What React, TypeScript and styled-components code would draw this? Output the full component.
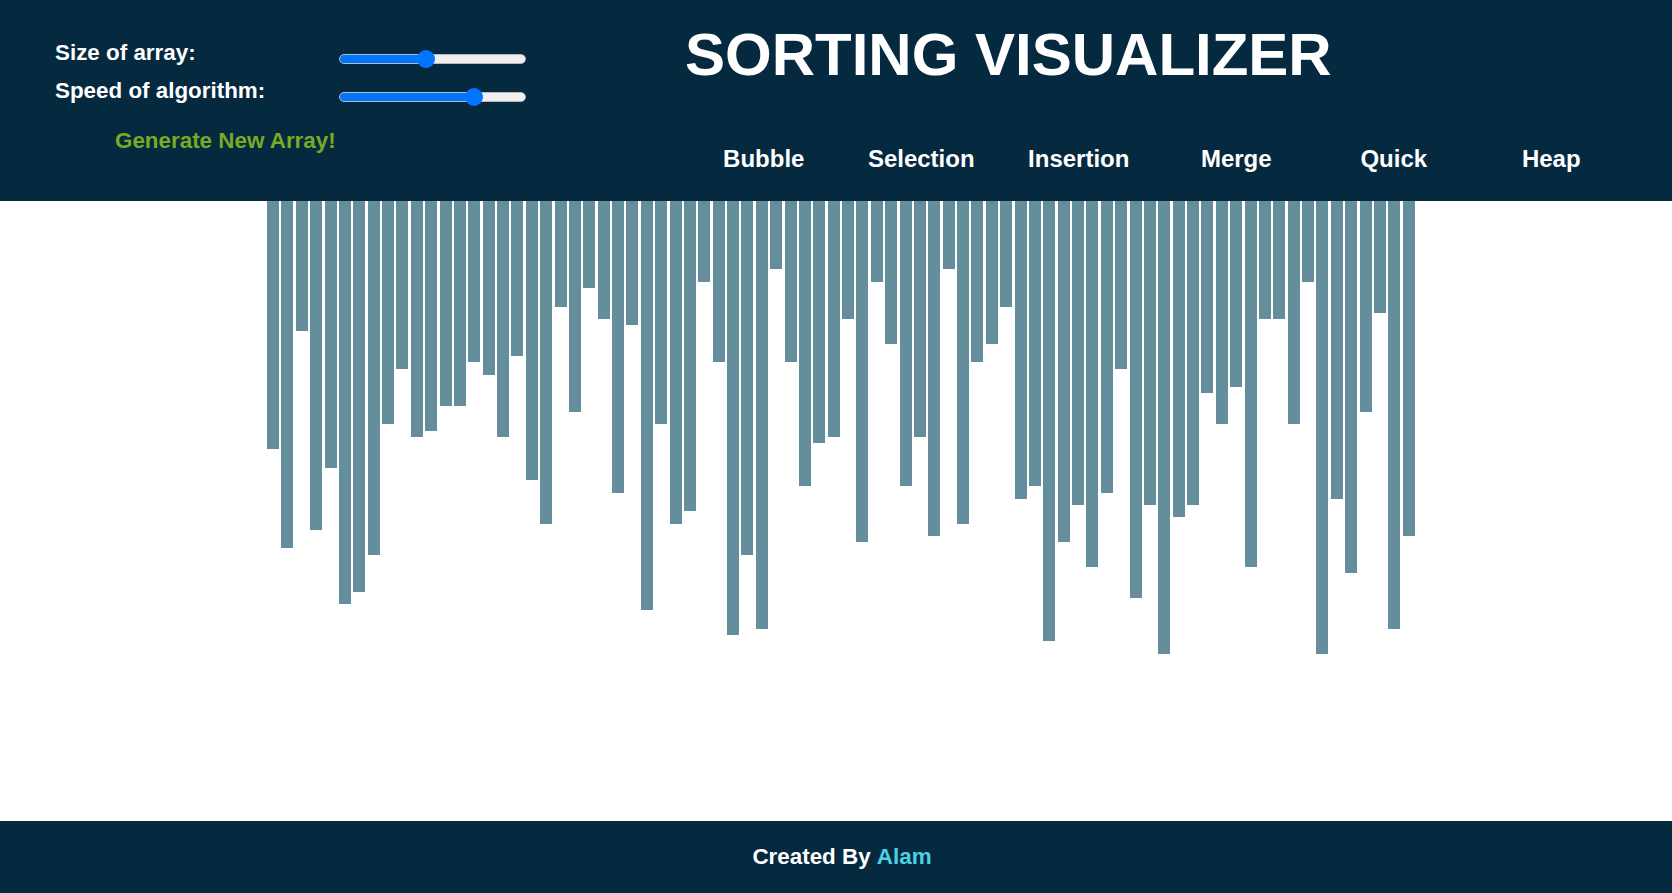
import React, { useState } from 'react';
import styled, { createGlobalStyle } from 'styled-components';

const GlobalStyle = createGlobalStyle`
  html, body {
    margin: 0;
    padding: 0;
    height: 100%;
  }
  body {
    font-family: "Liberation Sans", Arial, sans-serif;
  }
  * {
    box-sizing: border-box;
  }
`;

const NAVY = '#05293f';
const BAR = '#658e9c';

const Page = styled.div`
  min-height: 100vh;
  display: flex;
  flex-direction: column;
`;

const Header = styled.header`
  height: 201px;
  background-color: ${NAVY};
  display: flex;
  color: #ffffff;
  font-weight: bold;
`;

const Controls = styled.section`
  width: 685px;
  padding: 40px 0 0 55px;
  display: flex;
  flex-direction: column;
  align-items: flex-start;
`;

const ControlGrid = styled.div`
  display: grid;
  grid-template-columns: 284px 187px;
  grid-auto-rows: 26px;
  row-gap: 12px;
`;

const Label = styled.label`
  font-size: 22.4px;
  line-height: 26px;
`;

const Slider = styled.input.attrs({ type: 'range' })`
  -webkit-appearance: none;
  appearance: none;
  width: 187px;
  height: 18px;
  margin: 10px 0 0;
  padding: 0;
  background: transparent;
  align-self: start;

  &::-webkit-slider-runnable-track {
    height: 10px;
    border-radius: 5px;
    border: 1px solid #b9b9b9;
    background: linear-gradient(to right, #0075ff var(--fill), #efefef var(--fill));
  }

  &::-webkit-slider-thumb {
    -webkit-appearance: none;
    width: 18px;
    height: 18px;
    margin-top: -5px;
    border: none;
    border-radius: 50%;
    background: #0075ff;
  }
`;

const GenerateButton = styled.button`
  margin: 24px 0 0 60px;
  padding: 0;
  border: none;
  background: none;
  color: #78aa24;
  font-family: inherit;
  font-weight: bold;
  font-size: 22.4px;
  line-height: 26px;
  cursor: pointer;
`;

const TitleArea = styled.section`
  flex: 1;
  padding: 20px 42px 0 0;
`;

const Title = styled.h1`
  margin: 0;
  font-size: 60px;
  line-height: 69px;
  font-weight: bold;
`;

const AlgoNav = styled.nav`
  margin-top: 56px;
  display: flex;
`;

const AlgoButton = styled.button`
  flex: 1;
  padding: 0;
  border: none;
  background: none;
  color: #ffffff;
  font-family: inherit;
  font-weight: bold;
  font-size: 24px;
  line-height: 28px;
  text-align: center;
  cursor: pointer;
`;

const Stage = styled.main`
  flex: 1;
  display: flex;
  justify-content: center;
  padding-left: 10px;
  background: #ffffff;
`;

const BarRow = styled.div`
  width: 1148px;
  display: flex;
  justify-content: space-between;
  align-items: flex-start;
`;

const Bar = styled.div`
  width: 12px;
  background-color: ${BAR};
`;

const Footer = styled.footer`
  height: 72px;
  background-color: ${NAVY};
  display: flex;
  align-items: center;
  justify-content: center;
  padding-left: 12px;
  color: #ffffff;
  font-weight: bold;
  font-size: 22.4px;
`;

const Author = styled.span`
  color: #4dd0e1;
`;

const HEIGHTS = [
  248, 347, 130, 329, 267, 403, 391, 354, 223, 168,
  236, 230, 205, 205, 161, 174, 236, 155, 279, 323,
  106, 211, 87, 118, 292, 124, 409, 223, 323, 310,
  81, 161, 434, 354, 428, 68, 161, 285, 242, 236,
  118, 341, 81, 143, 285, 236, 335, 68, 323, 161,
  143, 106, 298, 285, 440, 341, 304, 366, 292, 168,
  397, 304, 453, 316, 304, 192, 223, 186, 366, 118,
  118, 223, 81, 453, 298, 372, 211, 112, 428, 335,
];

const ALGORITHMS = ['Bubble', 'Selection', 'Insertion', 'Merge', 'Quick', 'Heap'];

function fillOf(value: number) {
  const f = value / 100;
  return `calc(9px + ${f} * (100% - 18px))`;
}

export default function App() {
  const [size, setSize] = useState(46);
  const [speed, setSpeed] = useState(75);

  return (
    <Page>
      <GlobalStyle />
      <Header>
        <Controls>
          <ControlGrid>
            <Label htmlFor="size">Size of array:</Label>
            <Slider
              id="size"
              min={0}
              max={100}
              value={size}
              onChange={(e) => setSize(Number(e.target.value))}
              style={{ '--fill': fillOf(size) } as React.CSSProperties}
            />
            <Label htmlFor="speed">Speed of algorithm:</Label>
            <Slider
              id="speed"
              min={0}
              max={100}
              value={speed}
              onChange={(e) => setSpeed(Number(e.target.value))}
              style={{ '--fill': fillOf(speed) } as React.CSSProperties}
            />
          </ControlGrid>
          <GenerateButton>Generate New Array!</GenerateButton>
        </Controls>
        <TitleArea>
          <Title>SORTING VISUALIZER</Title>
          <AlgoNav>
            {ALGORITHMS.map((name) => (
              <AlgoButton key={name}>{name}</AlgoButton>
            ))}
          </AlgoNav>
        </TitleArea>
      </Header>
      <Stage>
        <BarRow>
          {HEIGHTS.map((h, i) => (
            <Bar key={i} style={{ height: h }} />
          ))}
        </BarRow>
      </Stage>
      <Footer>
        Created By&nbsp;<Author>Alam</Author>
      </Footer>
    </Page>
  );
}
